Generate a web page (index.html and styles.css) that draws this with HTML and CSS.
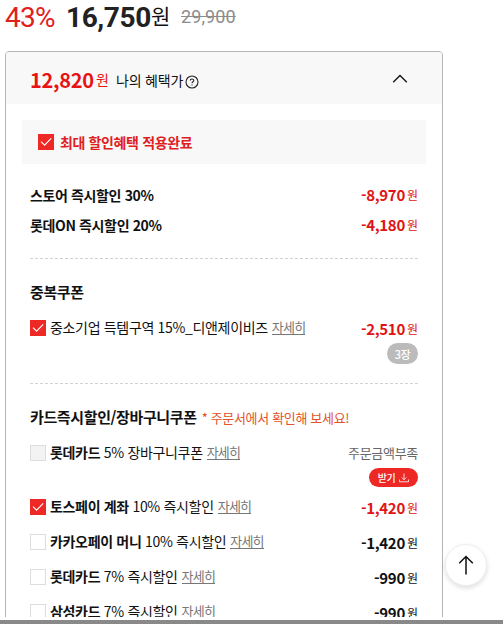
FILE: index.html
```html
<!DOCTYPE html>
<html lang="ko">
<head>
<meta charset="utf-8">
<title>나의 혜택가</title>
<link rel="stylesheet" href="styles.css">
</head>
<body>
<svg class="defs" width="0" height="0"><symbol id="check" viewBox="0 0 16 16"><path d="M3 7.7 6.6 11.2 13.2 4.3" fill="none" stroke="#fff" stroke-width="1.1"/></symbol></svg>
<main class="page">
  <div class="price"><span class="rate">43%</span><strong>16,750</strong><span class="won">원</span><del>29,900</del></div>
  <section class="card">
    <header class="head">
      <strong>12,820</strong><span class="unit">원</span><span class="label">나의 혜택가</span>
      <svg class="help" viewBox="0 0 14 14"><circle cx="7" cy="7" r="6" fill="none" stroke="#222" stroke-width="1.1"/><path d="M5.2 5.6C5.2 3.4 8.8 3.4 8.8 5.5 8.8 6.7 7 6.8 7 8.3M7 9.4v1.2" fill="none" stroke="#222" stroke-width="1.1"/></svg>
      <svg class="chevron" viewBox="0 0 16 10"><path d="M1.2 8.3 8 1.5l6.8 6.8" fill="none" stroke="#111" stroke-width="1.3"/></svg>
    </header>
    <div class="notice"><svg class="box on"><use href="#check"/></svg><b>최대 할인혜택 적용완료</b></div>
    <div class="group first">
      <div class="row short"><b class="store">스토어 즉시할인 30%</b><span class="amount red"><b>-8,970</b>원</span></div>
      <div class="row short"><b class="store">롯데ON 즉시할인 20%</b><span class="amount red"><b>-4,180</b>원</span></div>
    </div>
    <div class="group second">
      <h2>중복쿠폰</h2>
      <div class="row"><svg class="box on"><use href="#check"/></svg><span class="name">중소기업 득템구역 15%_디앤제이비즈</span><a>자세히</a><span class="amount red"><b>-2,510</b>원</span></div>
      <div class="action"><span class="pill count">3장</span></div>
    </div>
    <div class="group third">
      <h2>카드즉시할인/장바구니쿠폰<small>* 주문서에서 확인해 보세요!</small></h2>
      <div class="row"><i class="box off"></i><span class="name"><b>롯데카드</b> 5% 장바구니쿠폰</span><a>자세히</a><span class="lack">주문금액부족</span></div>
      <div class="action get"><span class="pill receive">받기<svg viewBox="0 0 10 10"><path d="M5 .5v6M2.7 4.5 5 6.8l2.3-2.3M.5 6.5v2.3h9V6.5" fill="none" stroke="#fff" stroke-width=".8"/></svg></span></div>
      <div class="row"><svg class="box on"><use href="#check"/></svg><span class="name"><b>토스페이 계좌</b> 10% 즉시할인</span><a>자세히</a><span class="amount red"><b>-1,420</b>원</span></div>
      <div class="row"><i class="box"></i><span class="name"><b>카카오페이 머니</b> 10% 즉시할인</span><a>자세히</a><span class="amount"><b>-1,420</b>원</span></div>
      <div class="row"><i class="box"></i><span class="name"><b>롯데카드</b> 7% 즉시할인</span><a>자세히</a><span class="amount"><b>-990</b>원</span></div>
      <div class="row"><i class="box"></i><span class="name"><b>삼성카드</b> 7% 즉시할인</span><a>자세히</a><span class="amount"><b>-990</b>원</span></div>
    </div>
  </section>
</main>
<div class="bottom"></div>
<button class="top" aria-label="맨 위로"><svg viewBox="0 0 16 20"><path d="M8 19.5V1.5M1.2 8.3 8 1.5l6.8 6.8" fill="none" stroke="#111" stroke-width="1.5"/></svg></button>
</body>
</html>
```

FILE: styles.css
```css
* { box-sizing: border-box; }
body { margin: 0; width: 503px; height: 624px; overflow: hidden; background: #fff; color: #111; font-family: "Noto Sans CJK KR", sans-serif; font-size: 14px; letter-spacing: -.37px; line-height: 20px; white-space: nowrap; }
.defs { display: none; }
.page { height: 617px; overflow: hidden; }
.price { display: flex; height: 51px; padding-left: 5px; font-family: Roboto, "Noto Sans CJK KR", sans-serif; font-size: 28px; line-height: 36px; letter-spacing: 0; }
.price .rate { width: 61px; color: #e0201e; font-weight: 400; letter-spacing: -.7px; }
.price strong { width: 85px; color: #222; letter-spacing: -.4px; }
.price .won { width: 30px; font-size: 21px; line-height: 34px; }
.price del { color: #8c8c8c; font-size: 18px; line-height: 33px; letter-spacing: .1px; }
.card { width: 438px; height: 620px; border: 1px solid #b5b5b5; border-radius: 4px; margin-left: 5px; overflow: hidden; }
.head { display: flex; align-items: center; height: 52px; padding: 5px 34px 0 24px; background: #f8f8f8; }
.head strong { width: 66px; color: #e61414; font-size: 20px; letter-spacing: -.3px; margin-top: -2px; }
.head .unit { width: 21px; color: #e61414; font-size: 14px; margin-top: -4px; }
.head .label { font-size: 14px; letter-spacing: -.2px; margin-left: -1px; margin-top: -1px; }
.help { width: 14px; height: 14px; margin: 3px 0 0 2px; }
.chevron { width: 16px; height: 10px; margin: -3px 0 0 auto; }
.notice { display: flex; align-items: center; height: 44px; margin: 16px 16px 0; padding-left: 16px; background: #f8f8f8; color: #e0201e; }
.notice b { margin-left: 6px; }
.box { flex: none; width: 16px; height: 16px; border: 1px solid #ddd; }
.box.on { border: 0; background: #ee2824; }
.box.off { background: #f3f3f3; }
.group { margin: 0 24px; }
.first { height: 95px; padding-top: 16px; border-bottom: 1px dashed #d2d2d2; }
.second { height: 125px; padding-top: 22px; border-bottom: 1px dashed #d2d2d2; }
.third { padding-top: 22px; }
.row { display: flex; align-items: center; height: 35px; }
.row.short { height: 30px; }
.name { margin: -2px 0 0 4px; letter-spacing: -.33px; }
.row a { margin: -1px 0 0 4px; color: #777; font-size: 13px; line-height: 14px; border-bottom: 1px solid #777; letter-spacing: -.8px; }
.amount { margin: 2px 0 0 auto; font-size: 12px; letter-spacing: 0; display: flex; align-items: center; gap: 2px; }
.amount b { font-size: 15px; letter-spacing: -.3px; }
.short .amount { margin-top: 0; }
.red { color: #e01414; }
h2 { margin: 0; font-size: 15px; font-weight: 700; line-height: 21px; height: 29px; letter-spacing: -.37px; }
h2 small { margin-left: 5px; color: #e35228; font-size: 13px; font-weight: 400; letter-spacing: -.33px; }
.action { display: flex; justify-content: flex-end; align-items: flex-start; height: 19px; }
.pill { display: flex; align-items: center; justify-content: center; border-radius: 11px; color: #fff; font-size: 11px; font-weight: 500; }
.count { width: 31px; height: 21px; background: #bbb; margin-top: -2px; }
.receive { width: 49px; height: 19px; background: #ee2824; gap: 4px; font-size: 10px; margin-top: -2px; }
.receive svg { width: 10px; height: 10px; }
.lack { margin: 1px 0 0 auto; color: #666; font-size: 13px; letter-spacing: -.3px; }
.bottom { height: 4px; margin-top: 3px; background: #898989; }
.top { position: fixed; left: 445px; top: 544px; width: 42px; height: 42px; padding: 0; display: grid; place-items: center; border: 1px solid #eee; border-radius: 50%; background: #fff; box-shadow: 0 2px 5px #0002; }
.top svg { width: 16px; height: 20px; }
```
